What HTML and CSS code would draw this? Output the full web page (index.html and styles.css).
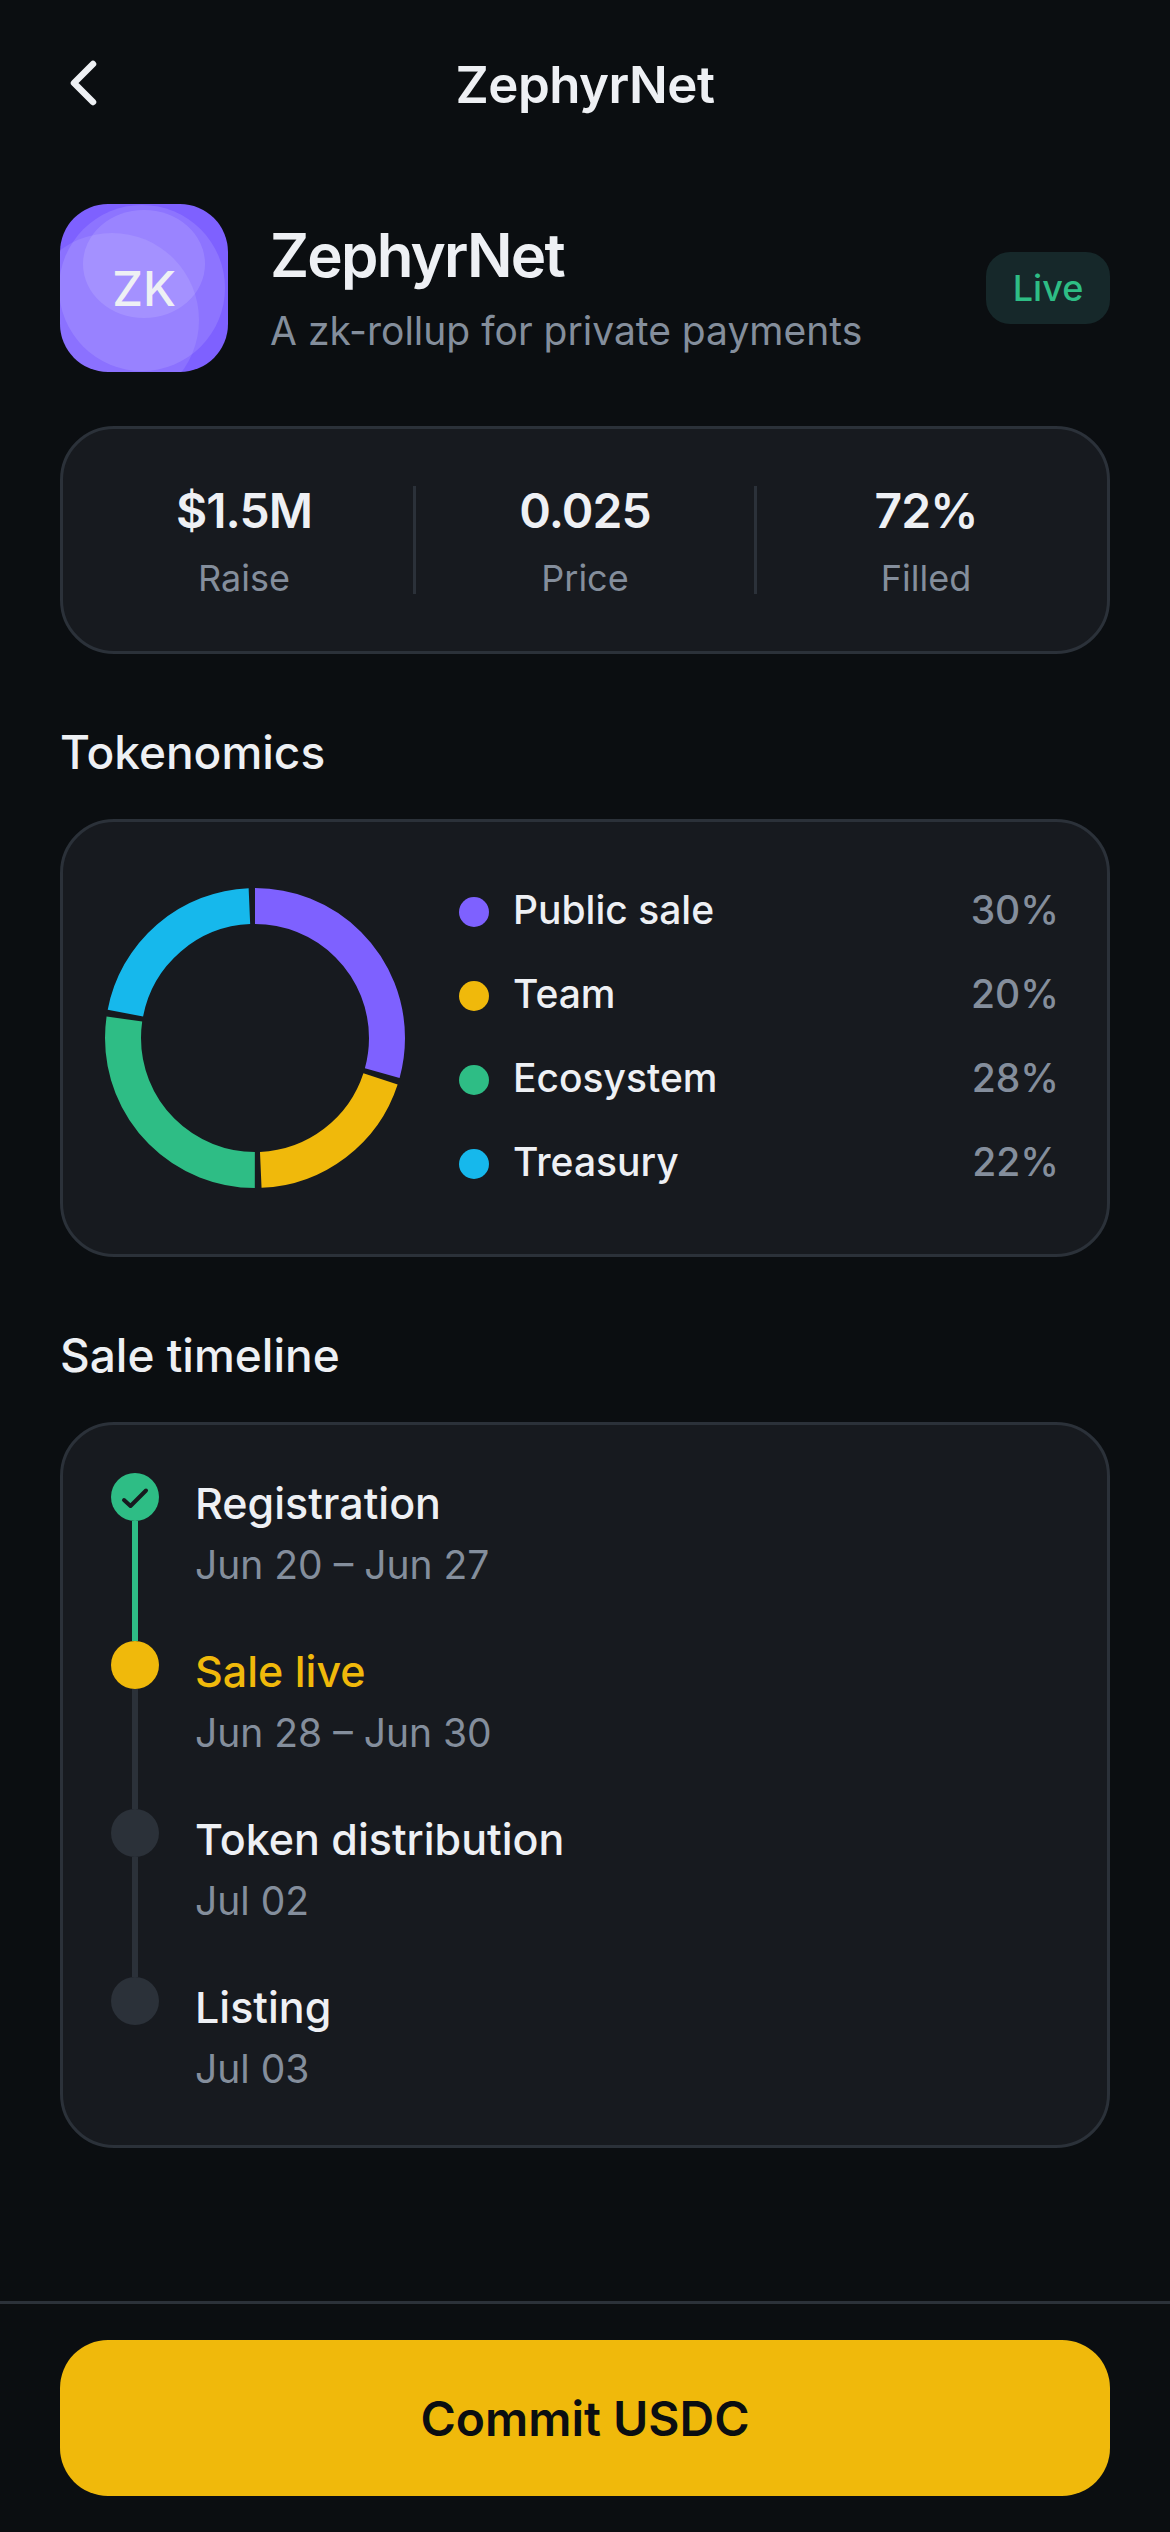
FILE: index.html
```html
<!DOCTYPE html>
<html lang="en">
<head>
    <meta charset="UTF-8">
    <meta name="viewport" content="width=device-width, initial-scale=1.0">
    <title>ZephyrNet</title>
    <link rel="stylesheet" href="styles.css">
</head>
<body>
    <div class="screen">
        <header class="topbar">
            <svg class="back" width="36" height="54" viewBox="0 0 36 54">
                <path d="M27 7 L8 26 L27 45" fill="none" stroke="#eef0f4" stroke-width="6.5" stroke-linecap="round" stroke-linejoin="round"/>
            </svg>
            <h1>ZephyrNet</h1>
        </header>

        <main class="content">
            <section class="hero">
                <div class="logo">
                    <svg class="logo-art" width="168" height="168" viewBox="0 0 168 168">
                        <rect width="168" height="168" fill="#7e61ff"/>
                        <circle cx="82" cy="84" r="83" fill="#fff" fill-opacity="0.12"/>
                        <circle cx="52" cy="116" r="87" fill="#fff" fill-opacity="0.1"/>
                        <ellipse cx="84" cy="60" rx="61" ry="54" fill="#fff" fill-opacity="0.12"/>
                    </svg>
                    <span>ZK</span>
                </div>
                <div class="hero-text">
                    <h2>ZephyrNet</h2>
                    <p>A zk-rollup for private payments</p>
                </div>
                <span class="badge">Live</span>
            </section>

            <section class="card stats">
                <div class="stat"><strong>$1.5M</strong><span>Raise</span></div>
                <div class="divider"></div>
                <div class="stat"><strong>0.025</strong><span>Price</span></div>
                <div class="divider"></div>
                <div class="stat"><strong>72%</strong><span>Filled</span></div>
            </section>

            <h3>Tokenomics</h3>
            <section class="card tokenomics">
                <svg class="donut" width="300" height="300" viewBox="0 0 300 300">
                    <g fill="none" stroke-width="36" transform="rotate(-90 150 150)">
                        <circle cx="150" cy="150" r="132" stroke="#7e61ff" stroke-dasharray="242.8 586.6" stroke-dashoffset="0"/>
                        <circle cx="150" cy="150" r="132" stroke="#f0b90b" stroke-dasharray="159.9 669.5" stroke-dashoffset="-248.8"/>
                        <circle cx="150" cy="150" r="132" stroke="#2ebd85" stroke-dasharray="226.2 603.2" stroke-dashoffset="-414.7"/>
                        <circle cx="150" cy="150" r="132" stroke="#16b8ec" stroke-dasharray="176.5 652.9" stroke-dashoffset="-646.9"/>
                    </g>
                </svg>
                <ul class="legend">
                    <li><i class="dot purple"></i><span>Public sale</span><b>30%</b></li>
                    <li><i class="dot yellow"></i><span>Team</span><b>20%</b></li>
                    <li><i class="dot green"></i><span>Ecosystem</span><b>28%</b></li>
                    <li><i class="dot blue"></i><span>Treasury</span><b>22%</b></li>
                </ul>
            </section>

            <h3>Sale timeline</h3>
            <section class="card timeline">
                <div class="step done">
                    <div class="marker">
                        <div class="node">
                            <svg width="48" height="48" viewBox="0 0 48 48">
                                <path d="M13 27 L19.5 33 L35 17.5" fill="none" stroke="#171a1f" stroke-width="4" stroke-linecap="round" stroke-linejoin="round"/>
                            </svg>
                        </div>
                        <div class="line"></div>
                    </div>
                    <div class="step-text"><h4>Registration</h4><p>Jun 20 – Jun 27</p></div>
                </div>
                <div class="step active">
                    <div class="marker"><div class="node"></div><div class="line"></div></div>
                    <div class="step-text"><h4>Sale live</h4><p>Jun 28 – Jun 30</p></div>
                </div>
                <div class="step">
                    <div class="marker"><div class="node"></div><div class="line"></div></div>
                    <div class="step-text"><h4>Token distribution</h4><p>Jul 02</p></div>
                </div>
                <div class="step">
                    <div class="marker"><div class="node"></div></div>
                    <div class="step-text"><h4>Listing</h4><p>Jul 03</p></div>
                </div>
            </section>
        </main>

        <footer class="footer">
            <button>Commit USDC</button>
        </footer>
    </div>
</body>
</html>
```

FILE: styles.css
```css
* {
    box-sizing: border-box;
}

body {
    margin: 0;
    background-color: #0b0e11;
    color: #eef0f4;
    font-family: 'Inter', 'Liberation Sans', sans-serif;
}

h1, h2, h3, h4, p, ul {
    margin: 0;
    padding: 0;
}

.screen {
    display: flex;
    flex-direction: column;
    width: 1170px;
    height: 2532px;
    overflow: hidden;
}

/* Top bar */
.topbar {
    position: relative;
    height: 168px;
    display: flex;
    align-items: center;
    justify-content: center;
}

.topbar h1 {
    font-size: 51px;
    font-weight: 600;
    letter-spacing: -0.01em;
}

.back {
    position: absolute;
    left: 66px;
    top: 57px;
}

.content {
    flex: 1;
    padding: 36px 60px 0;
}

/* Project header */
.hero {
    display: flex;
    align-items: center;
    height: 168px;
}

.logo {
    position: relative;
    width: 168px;
    height: 168px;
    border-radius: 48px;
    overflow: hidden;
    display: flex;
    align-items: center;
    justify-content: center;
    flex-shrink: 0;
}

.logo-art {
    position: absolute;
    left: 0;
    top: 0;
}

.logo span {
    position: relative;
    font-size: 48px;
    font-weight: 500;
}

.hero-text {
    flex: 1;
    margin-left: 42px;
}

.hero-text h2 {
    font-size: 60px;
    font-weight: 600;
    line-height: 72px;
    letter-spacing: -0.03em;
}

.hero-text p {
    margin-top: 13px;
    font-size: 39px;
    line-height: 54px;
    color: #848e9c;
}

.badge {
    width: 124px;
    height: 72px;
    display: flex;
    align-items: center;
    justify-content: center;
    border-radius: 24px;
    background-color: #16282a;
    color: #2ebd85;
    font-size: 36px;
    font-weight: 500;
}

/* Cards */
.card {
    background-color: #171a1f;
    border: 3px solid #2b3139;
    border-radius: 54px;
}

.stats {
    display: flex;
    align-items: center;
    height: 228px;
    margin-top: 54px;
    padding: 0 12px;
}

.stat {
    flex: 1;
    display: flex;
    flex-direction: column;
    align-items: center;
}

.stat strong {
    font-size: 48px;
    font-weight: 600;
    line-height: 66px;
    letter-spacing: -0.02em;
}

.stat span {
    margin-top: 10px;
    font-size: 36px;
    line-height: 48px;
    color: #848e9c;
}

.divider {
    width: 3px;
    height: 108px;
    background-color: #2b3139;
}

h3 {
    margin-top: 68px;
    margin-bottom: 37px;
    font-size: 46px;
    font-weight: 500;
    line-height: 60px;
}

/* Tokenomics */
.tokenomics {
    display: flex;
    align-items: center;
    height: 438px;
    padding: 0 48px 0 42px;
}

.donut {
    flex-shrink: 0;
}

.legend {
    flex: 1;
    list-style: none;
    margin-left: 54px;
    display: flex;
    flex-direction: column;
    gap: 24px;
}

.legend li {
    display: flex;
    align-items: center;
    height: 60px;
    font-size: 39px;
    font-weight: 500;
}

.legend span {
    flex: 1;
    margin-bottom: 5px;
}

.legend b {
    margin-bottom: 5px;
    font-weight: 500;
    color: #848e9c;
}

.dot {
    width: 30px;
    height: 30px;
    margin-right: 24px;
    border-radius: 50%;
}

.purple { background-color: #7e61ff; }
.yellow { background-color: #f0b90b; }
.green { background-color: #2ebd85; }
.blue { background-color: #16b8ec; }

/* Timeline */
.timeline {
    padding: 48px 48px 46px;
}

.step {
    display: flex;
}

.marker {
    width: 48px;
    margin-right: 36px;
    display: flex;
    flex-direction: column;
    align-items: center;
}

.node {
    width: 48px;
    height: 48px;
    border-radius: 50%;
    background-color: #2b3139;
    flex-shrink: 0;
}

.node svg {
    display: block;
}

.line {
    flex: 1;
    width: 6px;
    background-color: #2b3139;
}

.step-text {
    padding-bottom: 46px;
}

.step:last-child .step-text {
    padding-bottom: 0;
}

.step h4 {
    font-size: 43px;
    font-weight: 500;
    line-height: 60px;
}

.step p {
    margin-top: 2px;
    font-size: 39px;
    line-height: 60px;
    color: #848e9c;
}

.done .node,
.done .line {
    background-color: #2ebd85;
}

.active .node {
    background-color: #f0b90b;
}

.active h4 {
    color: #f0b90b;
}

/* Footer */
.footer {
    border-top: 3px solid #2b3139;
    padding: 36px 60px;
}

.footer button {
    display: block;
    width: 100%;
    height: 156px;
    border: none;
    border-radius: 48px;
    background-color: #f0b90b;
    color: #0b0e11;
    font-family: inherit;
    font-size: 48px;
    font-weight: 600;
}
```
